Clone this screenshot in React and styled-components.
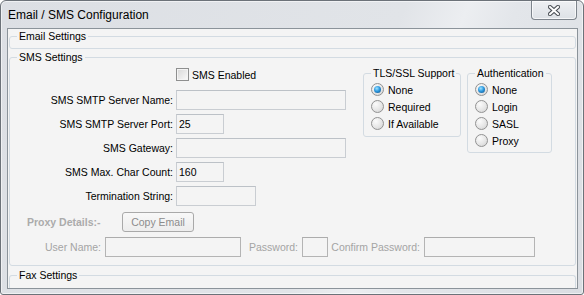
import React from 'react';
import styled, { createGlobalStyle } from 'styled-components';

const Global = createGlobalStyle`
  html, body { margin: 0; padding: 0; background: #ffffff; }
  body { font-family: "Liberation Sans", Arial, sans-serif; }
  * { box-sizing: border-box; }
`;

const Window = styled.div`
  width: 584px;
  height: 295px;
  display: flex;
  flex-direction: column;
  border: 1px solid #6c7279;
  border-radius: 6px 6px 3px 3px;
  background: linear-gradient(112deg, #dcdfe4 0%, #e1e4e8 58%, #eceef1 67%, #e3e6ea 74%, #dadde2 100%);
  box-shadow: inset 0 0 0 1px rgba(255, 255, 255, 0.55);
  padding: 0 5px 5px 6px;
  overflow: hidden;
`;

const TitleBar = styled.div`
  height: 27px;
  flex: none;
  display: flex;
  align-items: flex-start;
`;

const Title = styled.span`
  margin: 7px 0 0 1px;
  font-size: 12px;
  line-height: 14px;
  color: #000;
`;

const CloseButton = styled.div`
  margin-left: auto;
  margin-right: 1px;
  width: 46px;
  height: 19px;
  display: flex;
  align-items: center;
  justify-content: center;
  border: 1px solid #7d848c;
  border-top: none;
  border-radius: 0 0 4px 4px;
  background: linear-gradient(#eef0f3, #dde1e6);
  box-shadow: inset 0 0 0 1px rgba(255, 255, 255, 0.7);
`;

const Client = styled.div`
  flex: 1;
  display: flex;
  flex-direction: column;
  border: 1px solid #8b939a;
  background: #f4f4f4;
  padding: 0 1px;
  overflow: hidden;
`;

const GroupBox = styled.fieldset`
  margin: ${p => p.$mt || 0}px 0 0;
  padding: 0;
  border: 1px solid #d3dbe2;
  border-radius: 3px;
  min-width: 0;
  flex: none;
  ${p => p.$open && 'border-bottom: none; border-radius: 3px 3px 0 0; flex: 1;'}
  ${p => p.$w && `width: ${p.$w}px;`}
`;

const Legend = styled.legend`
  margin-left: 7px;
  padding: 0 2px;
  font-size: 10.5px;
  line-height: 14px;
  color: #000;
`;

const CollapsedBody = styled.div`
  height: 5px;
`;

const SmsBody = styled.div`
  padding: 2px 0 8px 0;
  display: flex;
  flex-direction: column;
`;

const TopRow = styled.div`
  display: flex;
  align-items: flex-start;
  gap: 17px;
`;

const FormGrid = styled.div`
  display: grid;
  grid-template-columns: 163px 170px;
  grid-auto-rows: 20px;
  column-gap: 3px;
  row-gap: 4px;
`;

const FieldLabel = styled.span`
  justify-self: end;
  align-self: center;
  font-size: 10.5px;
  color: ${p => (p.$disabled ? '#a4a4a4' : '#000')};
  white-space: nowrap;
  ${p => p.$w && `width: ${p.$w}px; text-align: right; flex: none;`}
`;

const CheckRow = styled.label`
  grid-column: 2;
  align-self: start;
  margin-top: 2px;
  display: flex;
  align-items: center;
  gap: 3px;
  font-size: 10.5px;
  color: #000;
`;

const CheckBox = styled.span`
  width: 13px;
  height: 13px;
  border: 1px solid #8e8f8f;
  background: linear-gradient(135deg, #d7d7d7, #fafafa);
  box-shadow: inset 0 0 0 1px #f4f4f4;
`;

const TextBox = styled.input`
  width: ${p => p.$w}px;
  height: 20px;
  margin: 0 0 0 ${p => p.$ml || 0}px;
  padding: 0 2px;
  border: 1px solid ${p => (p.$disabled ? '#b4b4b4' : '#c9cdd2')};
  border-top-color: ${p => (p.$disabled ? '#acacac' : '#bcc1c7')};
  background: #f4f4f4;
  font-family: "Liberation Sans", Arial, sans-serif;
  font-size: 10.5px;
  color: #000;
  outline: none;
  flex: none;
`;

const RadioGroups = styled.div`
  display: flex;
  align-items: flex-start;
  gap: 6px;
`;

const RadioList = styled.div`
  display: flex;
  flex-direction: column;
  padding: 1px 0 ${p => p.$pb}px 7px;
`;

const RadioRow = styled.label`
  height: 17px;
  display: flex;
  align-items: center;
  gap: 4px;
  font-size: 10.5px;
  color: #000;
`;

const RadioCircle = styled.span`
  position: relative;
  flex: none;
  width: 13px;
  height: 13px;
  border-radius: 50%;
  border: 1px solid #929292;
  background: radial-gradient(circle at 35% 30%, #fbfbfb 0%, #e6e6e6 55%, #cfcfcf 100%);
  ${p =>
    p.$checked &&
    `&::after {
      content: '';
      position: absolute;
      left: 2px; top: 2px;
      width: 7px; height: 7px;
      border-radius: 50%;
      background: radial-gradient(circle at 40% 35%, #9fe3ff 0%, #2f9ae0 45%, #0c4a82 100%);
    }`}
`;

const ProxyRow = styled.div`
  margin-top: 6px;
  padding-left: 17px;
  display: flex;
  align-items: center;
`;

const ProxyLabel = styled.span`
  width: 95px;
  font-size: 10.5px;
  font-weight: bold;
  color: #ababab;
`;

const Button = styled.button`
  width: 72px;
  height: 20px;
  padding: 0;
  border: 1px solid #a9a9a9;
  border-radius: 3px;
  background: linear-gradient(#f8f8f8, #ededed);
  font-family: "Liberation Sans", Arial, sans-serif;
  font-size: 10.5px;
  color: #8c8c8c;
`;

const UserRow = styled.div`
  margin-top: 5px;
  display: flex;
  align-items: center;
`;

const CloseIcon = () => (
  <svg width="12" height="11" viewBox="0 0 12 11">
    <path d="M2 2 L10 9 M10 2 L2 9" stroke="#4a4f55" strokeWidth="4.2" strokeLinecap="square" fill="none" />
    <path d="M2 2 L10 9 M10 2 L2 9" stroke="#ffffff" strokeWidth="2" strokeLinecap="square" fill="none" />
  </svg>
);

const Radio = ({ label, checked }) => (
  <RadioRow>
    <RadioCircle $checked={checked} />
    <span>{label}</span>
  </RadioRow>
);

export default function App() {
  return (
    <>
      <Global />
      <Window>
        <TitleBar>
          <Title>Email / SMS Configuration</Title>
          <CloseButton>
            <CloseIcon />
          </CloseButton>
        </TitleBar>
        <Client>
          <GroupBox>
            <Legend>Email Settings</Legend>
            <CollapsedBody />
          </GroupBox>
          <GroupBox $mt={1}>
            <Legend>SMS Settings</Legend>
            <SmsBody>
              <TopRow>
                <FormGrid>
                  <CheckRow>
                    <CheckBox />
                    <span>SMS Enabled</span>
                  </CheckRow>
                  <FieldLabel>SMS SMTP Server Name:</FieldLabel>
                  <TextBox $w={170} readOnly value="" />
                  <FieldLabel>SMS SMTP Server Port:</FieldLabel>
                  <TextBox $w={48} readOnly value="25" />
                  <FieldLabel>SMS Gateway:</FieldLabel>
                  <TextBox $w={170} readOnly value="" />
                  <FieldLabel>SMS Max. Char Count:</FieldLabel>
                  <TextBox $w={48} readOnly value="160" />
                  <FieldLabel>Termination String:</FieldLabel>
                  <TextBox $w={80} readOnly value="" />
                </FormGrid>
                <RadioGroups>
                  <GroupBox $w={98}>
                    <Legend>TLS/SSL Support</Legend>
                    <RadioList $pb={4}>
                      <Radio label="None" checked />
                      <Radio label="Required" />
                      <Radio label="If Available" />
                    </RadioList>
                  </GroupBox>
                  <GroupBox $w={85}>
                    <Legend>Authentication</Legend>
                    <RadioList $pb={3}>
                      <Radio label="None" checked />
                      <Radio label="Login" />
                      <Radio label="SASL" />
                      <Radio label="Proxy" />
                    </RadioList>
                  </GroupBox>
                </RadioGroups>
              </TopRow>
              <ProxyRow>
                <ProxyLabel>Proxy Details:-</ProxyLabel>
                <Button type="button">Copy Email</Button>
              </ProxyRow>
              <UserRow>
                <FieldLabel $disabled $w={91}>User Name:</FieldLabel>
                <TextBox $disabled $w={136} $ml={4} readOnly value="" />
                <FieldLabel $disabled $w={57}>Password:</FieldLabel>
                <TextBox $disabled $w={26} $ml={4} readOnly value="" />
                <FieldLabel $disabled $w={92}>Confirm Password:</FieldLabel>
                <TextBox $disabled $w={111} $ml={4} readOnly value="" />
              </UserRow>
            </SmsBody>
          </GroupBox>
          <GroupBox $mt={2} $open>
            <Legend>Fax Settings</Legend>
          </GroupBox>
        </Client>
      </Window>
    </>
  );
}
